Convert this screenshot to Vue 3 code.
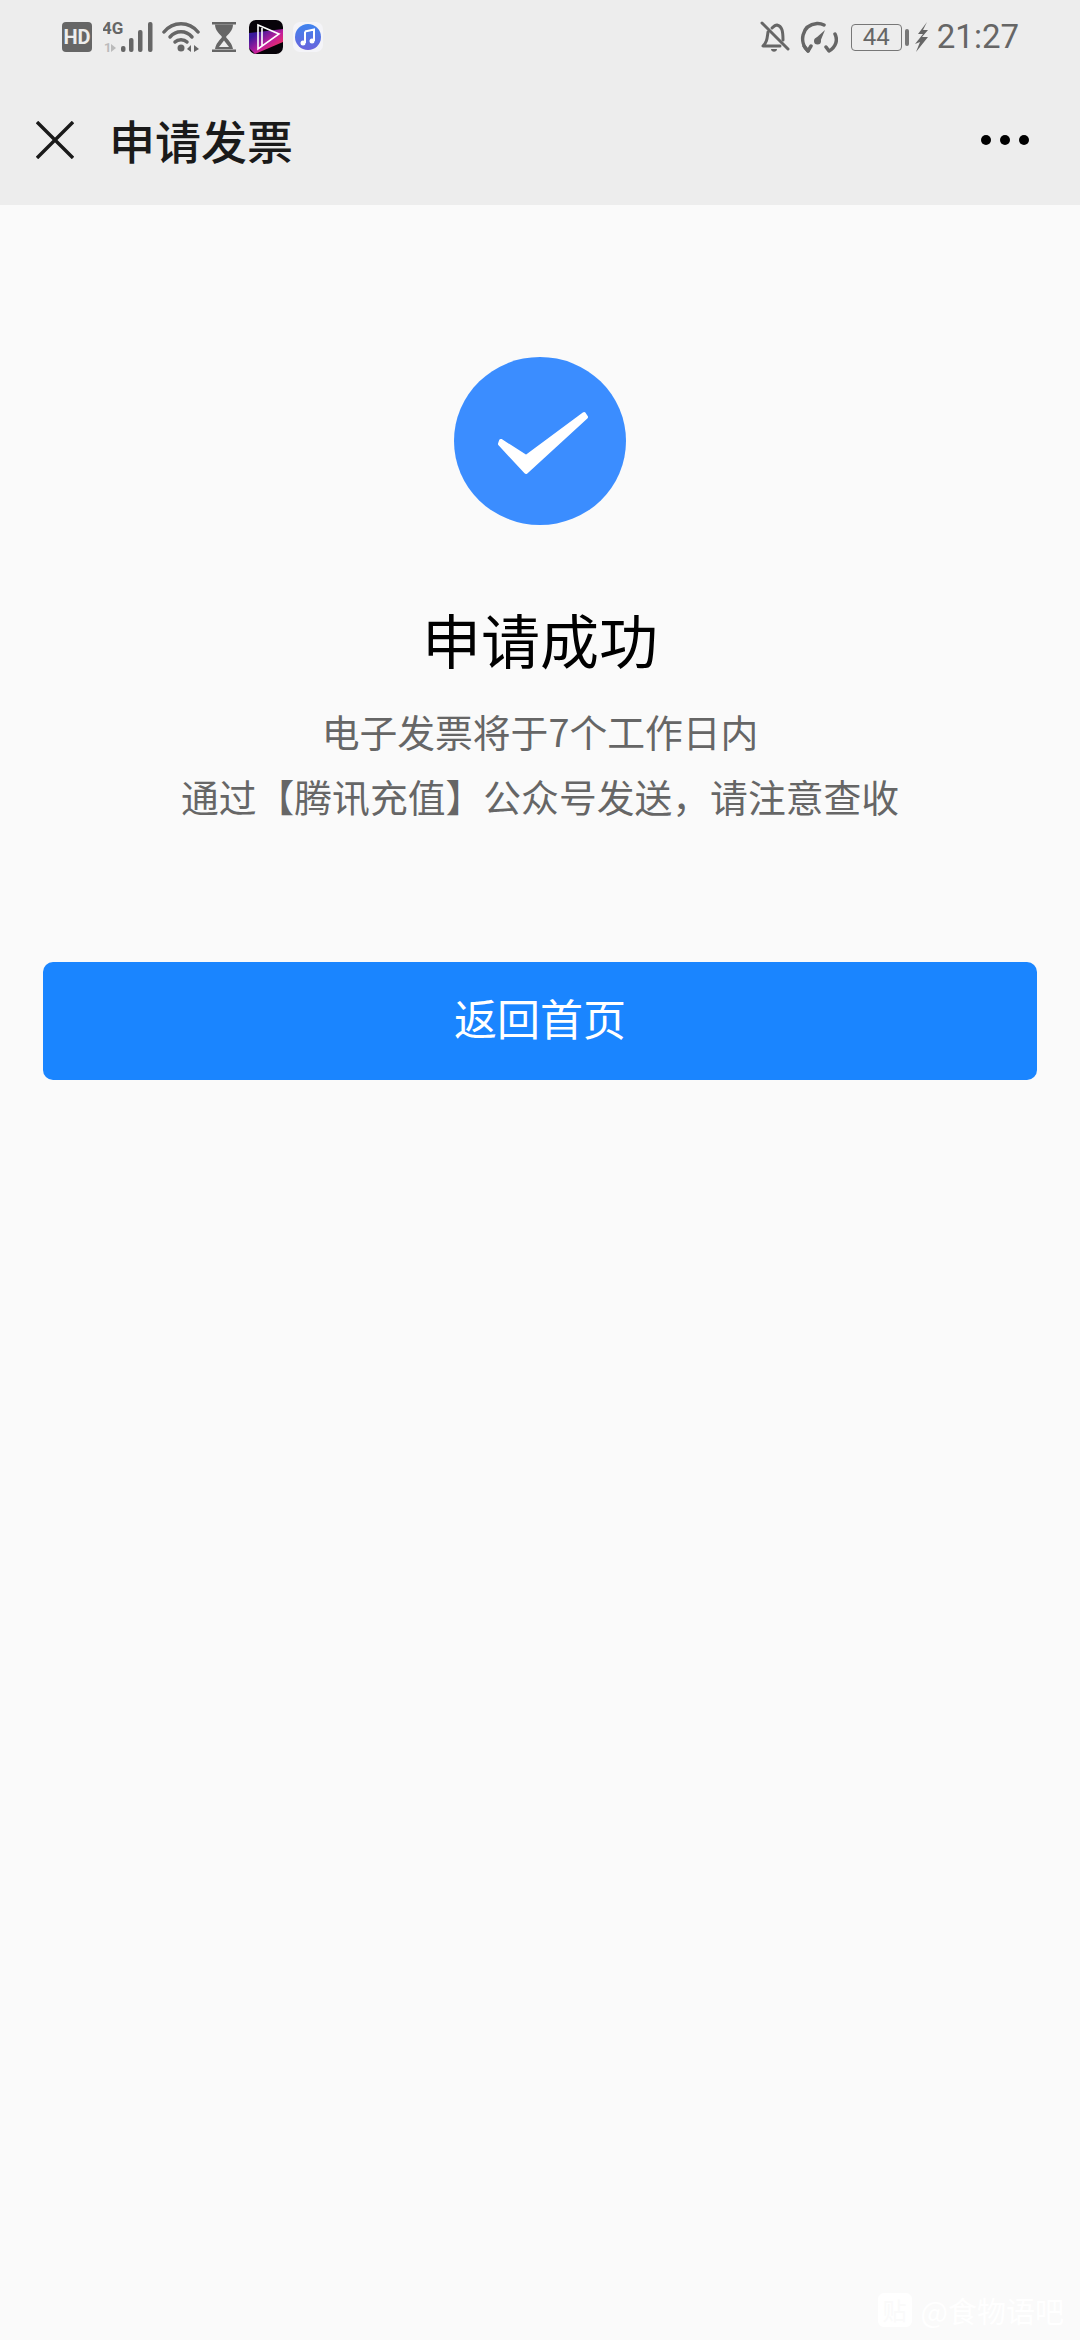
<template>
  <div class="page">
    <header class="top">
      <div class="status">
        <div class="status-left">
          <svg class="ic" width="30" height="30" viewBox="0 0 30 30">
            <rect width="30" height="30" rx="4" fill="#666" />
            <text x="15" y="22" text-anchor="middle" class="hd">HD</text>
          </svg>
          <svg class="ic sig" width="52" height="42" viewBox="0 -5 52 42">
            <text x="-1" y="13" class="g4">4G</text>
            <text x="1" y="31" class="arrows">1</text>
            <path d="M8 23 13 27 8 31z" fill="#bbb" />
            <g fill="#666">
              <rect x="18" y="25" width="4.500" height="6" rx="2" />
              <rect x="26" y="17" width="4.500" height="14" rx="2" />
              <rect x="35" y="9" width="4.500" height="22" rx="2" />
              <rect x="45" y="1" width="4.500" height="30" rx="2" />
            </g>
          </svg>
          <svg class="ic wifi" width="38" height="32" viewBox="0 0 38 32">
            <g fill="none" stroke="#666" stroke-width="3.500" stroke-linecap="round">
              <path d="M2 11C11 0 27 0 36 11" />
              <path d="M8 16C14 9 24 9 30 16" />
              <path d="M13 21C16 18 22 18 25 21" />
            </g>
            <circle cx="19" cy="27" r="3.500" fill="#666" />
            <path d="M29 24 25 28 29 31zM32 24 37 28 32 31z" fill="#666" />
          </svg>
          <svg class="ic hour" width="24" height="32" viewBox="0 0 24 32">
            <g fill="#666">
              <rect x="0" y="1" width="24" height="2.500" />
              <rect x="0" y="28.500" width="24" height="2.500" />
              <path d="M3 3.500H21C21 10 16 13 14 16C16 19 20 22 21 28H3C4 22 8 19 10 16C8 13 3 10 3 3.500Z" />
            </g>
            <path d="M12 19.500 7 26H17Z" fill="#ededed" />
          </svg>
          <svg class="ic app" width="34" height="34" viewBox="0 0 34 34">
            <defs>
              <linearGradient id="appfill" x1="0" y1="0" x2="1" y2="1">
                <stop offset="0.2" stop-color="#3b1a9c" />
                <stop offset="0.55" stop-color="#c01e9c" />
                <stop offset="0.8" stop-color="#f03060" />
              </linearGradient>
            </defs>
            <rect width="34" height="34" rx="7" fill="#070309" />
            <path d="M0 13 34 9V22L20 28 6 34 0 28Z" fill="url(#appfill)" />
            <path d="M9 5V29L30 14Z M13 8V26" fill="none" stroke="#fff" stroke-width="1.600" />
          </svg>
          <svg class="ic" width="30" height="30" viewBox="0 0 30 30">
            <defs>
              <linearGradient id="musicfill" x1="0" y1="0" x2="0" y2="1">
                <stop offset="0" stop-color="#3f84ee" />
                <stop offset="1" stop-color="#6a63dc" />
              </linearGradient>
            </defs>
            <rect width="30" height="30" rx="7" fill="#f4f4f8" />
            <circle cx="15" cy="15" r="13" fill="url(#musicfill)" />
            <path d="M12 9.500 21 7.500V19" fill="none" stroke="#fff" stroke-width="2" />
            <path d="M12 9.500V21" fill="none" stroke="#fff" stroke-width="2" />
            <circle cx="10" cy="21" r="2.500" fill="#fff" />
            <circle cx="19" cy="19" r="2.500" fill="#fff" />
          </svg>
        </div>
        <div class="status-right">
          <svg class="ic" width="30" height="32" viewBox="0 0 30 32">
            <g fill="none" stroke="#666" stroke-width="3" stroke-linecap="round" stroke-linejoin="round">
              <path d="M2 2 28 28" />
              <path d="M8 11C7 18 7 21 3 25H20" />
              <path d="M12 7C14 5 15 4 17 4C22 5 23 10 23 19" />
            </g>
            <path d="M11 28H17C17 31.500 11 31.500 11 28Z" fill="#666" />
          </svg>
          <svg class="ic gauge" width="38" height="32" viewBox="0 0 38 32">
            <g fill="none" stroke="#666" stroke-width="3.500" stroke-linecap="round" stroke-linejoin="round">
              <path d="M8 30C-1 22 1 4 17 2.500C20 2.300 22 3 24 4" />
              <path d="M4 25 8 30 11 25" />
              <path d="M35 13C38 19 36 26 29 30L26 26" />
            </g>
            <path d="M25 9 20 21 16 17Z" fill="#666" />
            <circle cx="17.500" cy="20" r="3.500" fill="#666" />
          </svg>
          <div class="battery">
            <span class="battery-box">44</span>
            <span class="battery-cap"></span>
          </div>
          <svg class="ic bolt" width="14" height="30" viewBox="0 0 14 30">
            <path d="M12 0 3 12H8L0 22 5 20 1 30 13 15H7L13 8H8Z" fill="#666" />
          </svg>
          <span class="clock">21:27</span>
        </div>
      </div>
      <div class="nav">
        <svg class="close" width="38" height="38" viewBox="0 0 38 38">
          <path d="M1 1 37 37M37 1 1 37" fill="none" stroke="#1a1a1a" stroke-width="3.400" />
        </svg>
        <h1 class="nav-title">申请发票</h1>
        <div class="more"><i></i><i></i><i></i></div>
      </div>
    </header>

    <main class="result">
      <svg class="tick" width="172" height="168" viewBox="0 0 172 168">
        <ellipse cx="86" cy="84" rx="86" ry="84" fill="#3b8dff" />
        <path d="M47 84 72 100 130 57 132 60 72 115 46 87Z" fill="#fff" stroke="#fff" stroke-width="4" stroke-linejoin="round" />
      </svg>
      <h2 class="result-title">申请成功</h2>
      <p class="result-text">电子发票将于7个工作日内</p>
      <p class="result-text">通过【腾讯充值】公众号发送，请注意查收</p>
      <button class="home-btn">返回首页</button>
    </main>

    <div class="mark">
      <span class="mark-logo">贴</span>
      <span class="mark-text">@食物语吧</span>
    </div>
  </div>
</template>

<script setup>
</script>

<style>
html,
body {
  margin: 0;
  background: #fafafa;
}
</style>

<style scoped>
.page {
  position: relative;
  width: 1080px;
  height: 2340px;
  background: #fafafa;
  overflow: hidden;
  font-family: "Noto Sans CJK SC", "Noto Sans", sans-serif;
}

.top {
  height: 205px;
  background: #ededed;
}

.status {
  display: flex;
  justify-content: space-between;
  align-items: center;
  height: 74px;
  padding: 0 61px 0 62px;
}

.status-left,
.status-right {
  display: flex;
  align-items: center;
}

.ic {
  display: block;
  flex: none;
}

.hd {
  font: 700 20px "Roboto", sans-serif;
  fill: #ededed;
}

.g4 {
  font: 700 17px "Roboto", sans-serif;
  fill: #666;
}

.arrows {
  font: 700 13px "Roboto", sans-serif;
  fill: #bbb;
}

.sig {
  margin-left: 11px;
}

.wifi {
  margin-left: 7px;
}

.hour {
  margin-left: 12px;
}

.app {
  margin-left: 13px;
}

.app + .ic {
  margin-left: 10px;
}

.gauge {
  margin-left: 10px;
}

.battery {
  display: flex;
  align-items: center;
  margin-left: 13px;
}

.battery-box {
  box-sizing: border-box;
  width: 51px;
  height: 27px;
  border: 1.500px solid #777;
  border-radius: 4px;
  text-align: center;
  font: 400 24px/24px "Roboto", sans-serif;
  color: #666;
}

.battery-cap {
  width: 4px;
  height: 17px;
  margin-left: 3px;
  background: #777;
  border-radius: 2px;
}

.bolt {
  margin-left: 6px;
}

.clock {
  margin-left: 8px;
  font: 400 33px/40px "Roboto", sans-serif;
  color: #666;
}

.nav {
  display: flex;
  align-items: center;
  height: 131px;
  padding: 0 51px 0 36px;
}

.close {
  display: block;
  flex: none;
}

.nav-title {
  flex: 1;
  margin: 0 0 2px 35px;
  font-size: 46px;
  font-weight: 500;
  line-height: 60px;
  color: #1a1a1a;
}

.more {
  display: flex;
  gap: 9px;
}

.more i {
  width: 10px;
  height: 10px;
  border-radius: 50%;
  background: #000;
}

.result {
  display: flex;
  flex-direction: column;
  align-items: center;
  padding-top: 152px;
}

.tick {
  display: block;
}

.result-title {
  margin: 76px 0 21px;
  font-size: 59px;
  font-weight: 400;
  line-height: 76px;
  color: #000;
}

.result-text {
  margin: 0;
  font-size: 37.800px;
  line-height: 65px;
  color: #666;
}

.home-btn {
  display: block;
  width: 994px;
  height: 118px;
  margin-top: 134px;
  padding: 0 0 8px;
  border: 0;
  border-radius: 10px;
  background: #1a85ff;
  color: #fff;
  font-family: inherit;
  font-size: 43px;
}

.mark {
  position: absolute;
  right: 16px;
  bottom: 13px;
  display: flex;
  align-items: center;
  gap: 9px;
  height: 34px;
  color: #fff;
}

.mark-logo {
  width: 34px;
  height: 34px;
  border-radius: 6px;
  background: #fff;
  color: #fafafa;
  font-size: 24px;
  line-height: 34px;
  text-align: center;
}

.mark-text {
  font-size: 29px;
  line-height: 34px;
}
</style>
